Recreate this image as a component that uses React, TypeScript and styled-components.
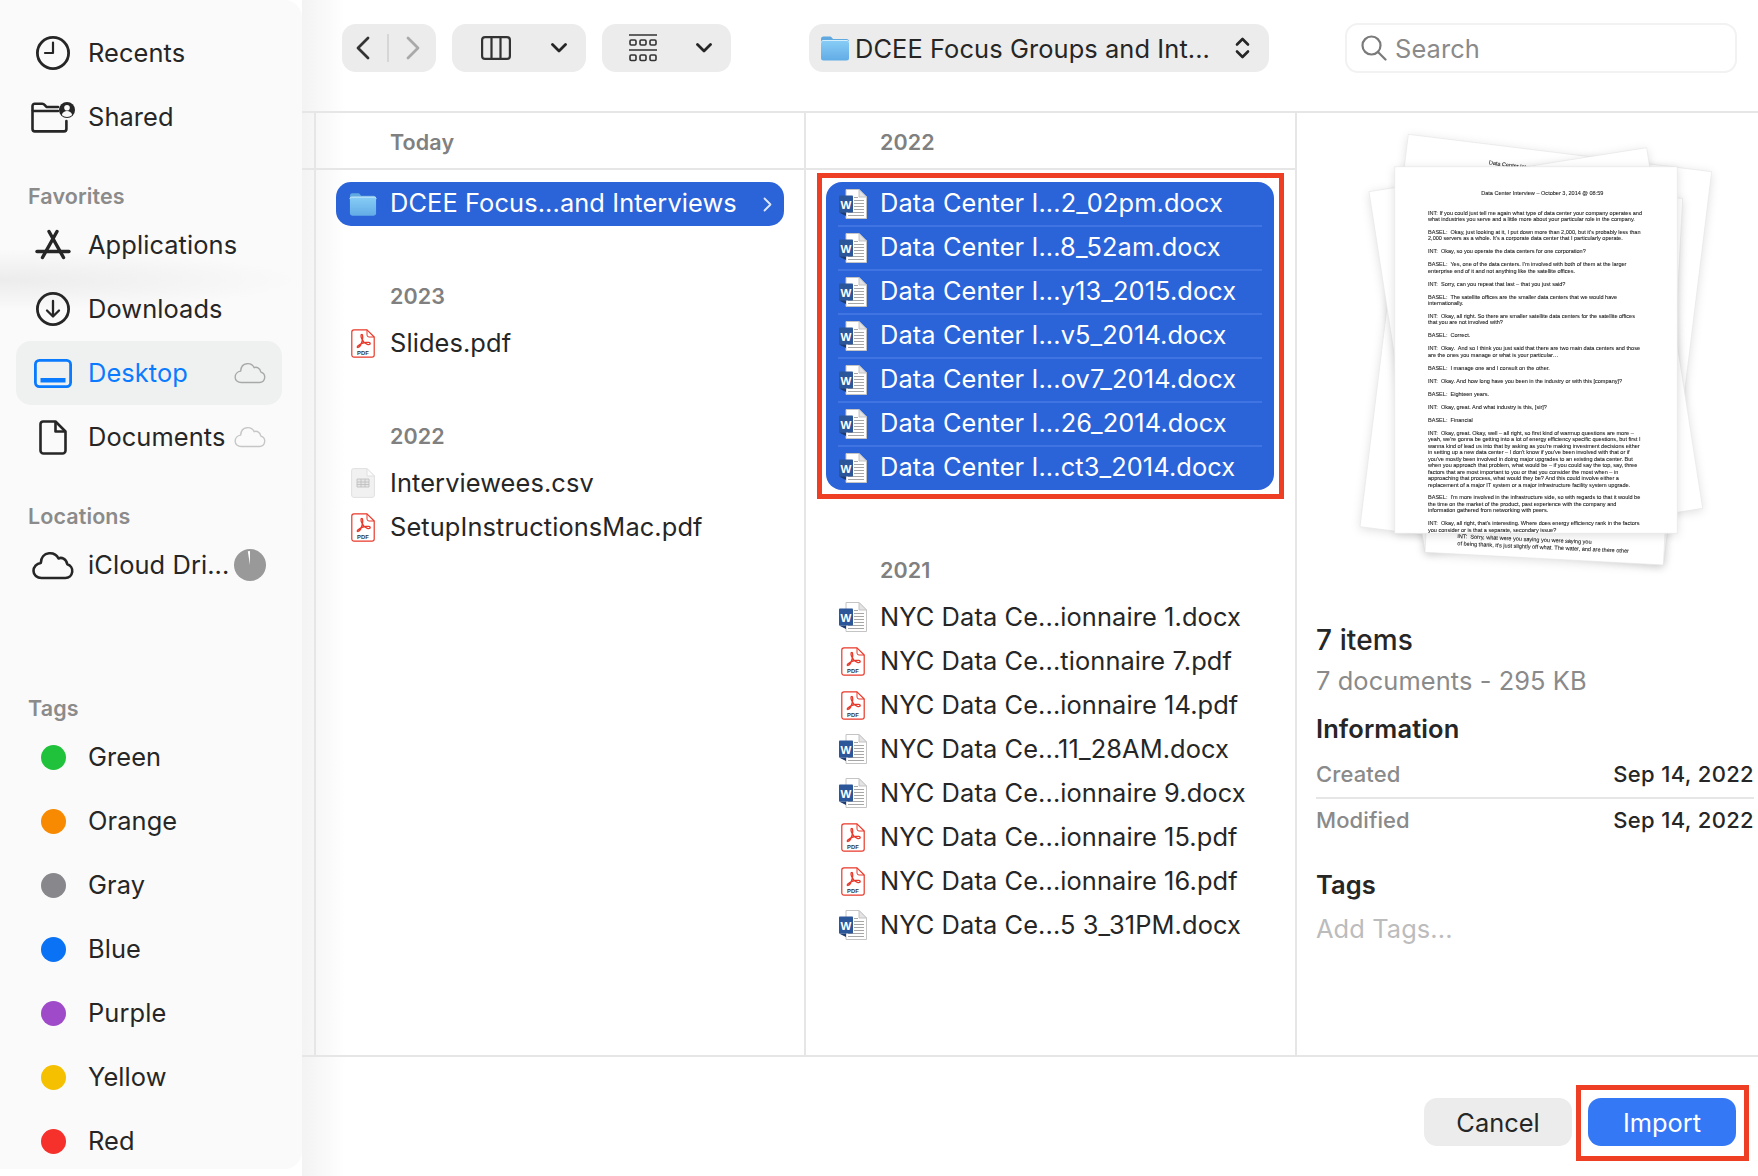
import React from 'react'
import styled, { createGlobalStyle } from 'styled-components'

const GlobalStyle = createGlobalStyle`
	html, body {
		margin: 0;
		padding: 0;
		background: #f4f4f4;
	}
	* {
		box-sizing: border-box;
	}
`

const FONT = `Inter, "Noto Sans", "Liberation Sans", sans-serif`

const Window = styled.div`
	width: 1758px;
	height: 1176px;
	display: flex;
	overflow: hidden;
	font-family: ${FONT};
	letter-spacing: 0.1px;
	color: #262626;
	background: #fff;
`

const Sidebar = styled.aside`
	width: 302px;
	height: 1169px;
	flex: none;
	padding-top: 21px;
	overflow: hidden;
	border-radius: 0 18px 18px 0;
	background:
		radial-gradient(ellipse 300px 30px at 0px 280px, #ececec 0%, rgba(236, 236, 236, 0) 100%),
		#fafafa;
	position: relative;
	z-index: 1;
`

const SectionTitle = styled.div<{ $gap: number }>`
	height: 34px;
	margin-top: ${p => p.$gap}px;
	padding-left: 28px;
	display: flex;
	align-items: center;
	font-size: 21.5px;
	font-weight: 600;
	color: #8b8b8b;
`

const NavRow = styled.div<{ $active?: boolean }>`
	height: 64px;
	margin: 0 20px 0 16px;
	padding: 0 16px 0 14px;
	display: flex;
	align-items: center;
	font-size: 25.4px;
	border-radius: 15px;
	background: ${p => (p.$active ? '#eff0f0' : 'transparent')};
	color: ${p => (p.$active ? '#0a7aff' : '#262626')};
`

const NavIcon = styled.span`
	width: 46px;
	flex: none;
	display: flex;
	align-items: center;
	justify-content: center;
	margin-right: 12px;
`

const NavLabel = styled.span`
	flex: 1;
	padding-bottom: 2px;
	white-space: nowrap;
`

const TagDot = styled.span<{ $color: string }>`
	width: 25px;
	height: 25px;
	border-radius: 50%;
	background: ${p => p.$color};
`

const Main = styled.main`
	flex: 1;
	min-width: 0;
	display: flex;
	flex-direction: column;
	background: linear-gradient(90deg, #f3f3f3 0, #ffffff 44px);
`

const Toolbar = styled.header`
	height: 113px;
	flex: none;
	padding: 0 0 15px 40px;
	display: flex;
	align-items: center;
	gap: 16px;
	border-bottom: 2px solid #e6e6e6;
`

const Pill = styled.div<{ $w: number; $ml?: number; $pad?: string }>`
	width: ${p => p.$w}px;
	height: 48px;
	flex: none;
	margin-left: ${p => p.$ml || 0}px;
	padding: ${p => p.$pad || '0'};
	display: flex;
	align-items: center;
	justify-content: space-between;
	border-radius: 14px;
	background: #ececec;
`

const NavSeparator = styled.span`
	width: 2px;
	height: 28px;
	background: #d6d6d6;
`

const PathLabel = styled.span`
	flex: 1;
	margin-left: 5px;
	font-size: 25.4px;
	white-space: nowrap;
	color: #262626;
`

const SearchField = styled.div`
	width: 392px;
	height: 50px;
	flex: none;
	margin-left: 60px;
	padding-left: 14px;
	display: flex;
	align-items: center;
	gap: 8px;
	font-size: 25.4px;
	color: #8a8a8a;
	background: #fff;
	border: 2px solid #f2f2f2;
	border-radius: 13px;
`

const Browser = styled.div`
	flex: 1;
	min-height: 0;
	display: flex;
`

const Column = styled.section<{ $w: number }>`
	width: ${p => p.$w}px;
	flex: none;
	border-right: 2px solid #e6e6e6;
`

const ColumnHead = styled.div`
	height: 57px;
	padding: 2px 0 0 74px;
	display: flex;
	align-items: center;
	font-size: 21.5px;
	font-weight: 600;
	color: #808080;
	border-bottom: 2px solid #e6e6e6;
`

const FileList = styled.div`
	padding-top: 12px;
`

const GroupTitle = styled.div<{ $gap: number; $after: number }>`
	height: 44px;
	margin: ${p => p.$gap}px 0 ${p => p.$after}px;
	padding-left: 74px;
	display: flex;
	align-items: center;
	font-size: 21.5px;
	font-weight: 600;
	color: #808080;
`

const FileName = styled.span`
	flex: 1;
	padding-bottom: 2px;
`

const FileRow = styled.div<{ $selected?: boolean }>`
	height: 44px;
	margin: 0 20px;
	padding: 0 12px 0 13px;
	display: flex;
	align-items: center;
	font-size: 25.4px;
	white-space: nowrap;
	color: ${p => (p.$selected ? '#fff' : '#262626')};
	background: ${p => (p.$selected ? '#2b63d9' : 'transparent')};
	border-radius: ${p => (p.$selected ? '15px' : '0')};
	${FileName} {
		padding-bottom: ${p => (p.$selected ? '4px' : '2px')};
	}
`

const FileIcon = styled.span`
	width: 28px;
	flex: none;
	margin-right: 13px;
	display: flex;
	align-items: center;
	justify-content: center;
`

const Selection = styled.div`
	position: relative;
	margin: 0 21px 0 20px;
	background: #2b63d9;
	border-radius: 16px;
	&::after {
		content: '';
		position: absolute;
		top: -9px;
		bottom: -9px;
		left: -9px;
		right: -10px;
		border: 5px solid #ee3f24;
		pointer-events: none;
	}
`

const SelectionRow = styled.div`
	position: relative;
	height: 44px;
	padding-left: 13px;
	display: flex;
	align-items: center;
	font-size: 25.4px;
	white-space: nowrap;
	color: #fff;
	${FileName} {
		padding-bottom: 4px;
	}
	& + &::before {
		content: '';
		position: absolute;
		top: -1px;
		left: 12px;
		right: 12px;
		height: 2px;
		background: #3f74e2;
	}
`

const Preview = styled.section`
	flex: 1;
	min-width: 0;
	padding: 7px 0 0 3px;
`

const PageStack = styled.svg`
	display: block;
	filter: blur(0.35px);
	text {
		font-family: "Liberation Sans", Arial, sans-serif;
		font-size: 16.7px;
		letter-spacing: 0;
		fill: #222;
		stroke: #222;
		stroke-width: 0.25;
		white-space: pre;
	}
	polygon {
		fill: #fff;
		stroke: #e6e6e6;
		stroke-width: 2;
		filter: drop-shadow(0 6px 14px rgba(0, 0, 0, 0.12));
	}
`

const Info = styled.div`
	margin-top: 40px;
	padding: 0 4px 0 16px;
`

const ItemCount = styled.div`
	height: 40px;
	line-height: 40px;
	font-size: 28px;
	font-weight: 500;
	color: #262626;
`

const Summary = styled.div`
	height: 38px;
	margin-top: 2px;
	line-height: 38px;
	font-size: 25.4px;
	color: #8a8a8a;
`

const InfoHeading = styled.div<{ $gap: number }>`
	height: 36px;
	margin-top: ${p => p.$gap}px;
	line-height: 36px;
	font-size: 25.5px;
	font-weight: 600;
	color: #262626;
`

const MetaRow = styled.div<{ $h: number; $line?: boolean }>`
	height: ${p => p.$h}px;
	padding-top: ${p => (p.$line ? '4px' : '0')};
	display: flex;
	align-items: center;
	justify-content: space-between;
	font-size: 22px;
	border-bottom: ${p => (p.$line ? '2px solid #e6e6e6' : 'none')};
`

const MetaKey = styled.span`
	font-weight: 500;
	color: #8a8a8a;
`

const MetaValue = styled.span`
	font-weight: 500;
	letter-spacing: 0.35px;
	color: #262626;
`

const AddTags = styled.div`
	height: 40px;
	margin-top: 6px;
	line-height: 40px;
	font-size: 25.4px;
	color: #bcbcbc;
`

const Footer = styled.footer`
	height: 121px;
	flex: none;
	padding: 41px 22px 0 0;
	display: flex;
	justify-content: flex-end;
	gap: 16px;
	border-top: 2px solid #e6e6e6;
`

const Button = styled.button<{ $primary?: boolean }>`
	position: relative;
	width: 148px;
	height: 48px;
	border: none;
	border-radius: 13px;
	font-family: ${FONT};
	font-size: 25.4px;
	color: ${p => (p.$primary ? '#fff' : '#262626')};
	background: ${p => (p.$primary ? '#3478f6' : '#ececec')};
	${p => p.$primary && `
		&::after {
			content: '';
			position: absolute;
			top: -13px;
			bottom: -15px;
			left: -12px;
			right: -13px;
			border: 5px solid #ee3f24;
		}
	`}
`

const ink = '#262626'

const ClockIcon = () => (
	<svg width="36" height="36" viewBox="0 0 36 36" fill="none" stroke={ink} strokeWidth="2.8" strokeLinecap="round" strokeLinejoin="round">
		<circle cx="18" cy="18" r="15.6" />
		<path d="M18 7.5V18H10" strokeWidth="2.2" />
	</svg>
)

const SharedIcon = () => (
	<svg width="44" height="32" viewBox="0 0 44 32" fill="none" stroke={ink} strokeWidth="2.6" strokeLinecap="round" strokeLinejoin="round">
		<path d="M1.5 9V5a2.2 2.2 0 0 1 2.2-2.2h7.5c1.2 0 1.8 .4 2.6 1.3L15.5 6H27" />
		<path d="M27 10H1.5v18a2.4 2.4 0 0 0 2.4 2.4H33a2.4 2.4 0 0 0 2.4-2.4v-8" />
		<circle cx="36" cy="9" r="8" fill={ink} stroke="none" />
		<circle cx="36" cy="6.8" r="2.8" fill="#fafafa" stroke="none" />
		<path d="M30.8 14c.8-3 3-4 5.2-4s4.400 1 5.200 4c-1.400 1.300-3.200 2-5.200 2s-3.800-.7-5.200-2z" fill="#fafafa" stroke="none" />
	</svg>
)

const AppsIcon = () => (
	<svg width="36" height="32" viewBox="0 0 36 32" fill="none" stroke={ink} strokeWidth="3.400" strokeLinecap="round">
		<path d="M14 2.500l14.500 26" />
		<path d="M22 2.500L7.500 28.500" />
		<path d="M2 22.500h32" />
	</svg>
)

const DownloadIcon = () => (
	<svg width="36" height="36" viewBox="0 0 36 36" fill="none" stroke={ink} strokeWidth="2.8" strokeLinecap="round" strokeLinejoin="round">
		<circle cx="18" cy="18" r="15.6" />
		<path d="M18 10v15M12 19.500l6 6 6-6" strokeWidth="2.3" />
	</svg>
)

const DesktopIcon = () => (
	<svg width="38" height="29" viewBox="0 0 38 29" fill="none">
		<rect x="1.400" y="1.400" width="35.200" height="26.200" rx="4" stroke="#0a7aff" strokeWidth="2.800" />
		<rect x="6.500" y="19" width="25" height="4.500" fill="#0a7aff" />
	</svg>
)

const DocumentIcon = () => (
	<svg width="28" height="35" viewBox="0 0 28 35" fill="none" stroke={ink} strokeWidth="2.600" strokeLinejoin="round">
		<path d="M4 1.500H16.500L26.500 11.500V30.500a3 3 0 0 1-3 3H4.500a3 3 0 0 1-3-3V4a2.500 2.500 0 0 1 2.500-2.500z" />
		<path d="M16.500 1.500V11.500H26.500" />
	</svg>
)

const CloudIcon = ({ w, h, color, weight }: { w: number; h: number; color: string; weight: number }) => (
	<svg width={w} height={h} viewBox="0 0 42 28" fill="none" stroke={color} strokeWidth={weight} strokeLinejoin="round">
		<path d="M9.500 26.500h24a7 7 0 0 0 1.800-13.700C34 7 29.500 5.500 26.500 7 24.500 3 20.500 1.500 17 1.800c-5 .4-8 4.200-8.200 9.700C4.500 12 1.500 15.500 1.500 19.500c0 4 3.500 7 8 7z" />
	</svg>
)

const StorageIcon = () => (
	<svg width="32" height="32" viewBox="0 0 32 32">
		<circle cx="16" cy="16" r="16" fill="#999999" />
		<path d="M16 16L13.800 2.200 16 2z" fill="#fff" />
	</svg>
)

const Chevron = ({ dir, color = '#333' }: { dir: 'left' | 'right'; color?: string }) => (
	<svg width="14" height="24" viewBox="0 0 14 24" fill="none" stroke={color} strokeWidth="2.800" strokeLinecap="round" strokeLinejoin="round">
		<path d={dir === 'left' ? 'M12 2L2 12l10 10' : 'M2 2l10 10L2 22'} />
	</svg>
)

const ChevronDown = () => (
	<svg width="16" height="10" viewBox="0 0 16 10" fill="none" stroke="#262626" strokeWidth="2.800" strokeLinecap="round" strokeLinejoin="round">
		<path d="M1.500 1.500L8 8l6.500-6.500" />
	</svg>
)

const ColumnsIcon = () => (
	<svg width="30" height="24" viewBox="0 0 30 24" fill="none" stroke="#333" strokeWidth="2.200">
		<rect x="1.100" y="1.100" width="27.800" height="21.800" rx="3" />
		<path d="M10.500 1v22M19.500 1v22" />
	</svg>
)

const GroupIcon = () => (
	<svg width="28" height="28" viewBox="0 0 28 28" fill="none" stroke="#333" strokeWidth="1.600">
		<path d="M0 1h28M0 16h28" />
		<rect x="1" y="6" width="6" height="5" rx="1.200" />
		<rect x="11" y="6" width="6" height="5" rx="1.200" />
		<rect x="21" y="6" width="6" height="5" rx="1.200" />
		<rect x="1" y="21" width="6" height="5.500" rx="1.200" />
		<rect x="11" y="21" width="6" height="5.500" rx="1.200" />
		<rect x="21" y="21" width="6" height="5.500" rx="1.200" />
	</svg>
)

const StepperIcon = () => (
	<svg width="15" height="22" viewBox="0 0 15 22" fill="none" stroke="#262626" strokeWidth="2.600" strokeLinecap="round" strokeLinejoin="round">
		<path d="M2 7.500L7.500 2 13 7.500M2 14.500L7.500 20 13 14.500" />
	</svg>
)

const SearchIcon = () => (
	<svg width="26" height="26" viewBox="0 0 26 26" fill="none" stroke="#7a7a7a" strokeWidth="2.200" strokeLinecap="round">
		<circle cx="10.500" cy="10.500" r="9" />
		<path d="M17 17l7.500 7.500" />
	</svg>
)

const FolderIcon = () => (
	<svg width="30" height="25" viewBox="0 0 30 25">
		<defs>
			<linearGradient id="folderFill" x1="0" y1="0" x2="0" y2="1">
				<stop offset="0" stopColor="#88cdf6" />
				<stop offset="1" stopColor="#62ace6" />
			</linearGradient>
		</defs>
		<path d="M1 5V3a2.500 2.500 0 0 1 2.500-2.500h6c1.200 0 1.800 .5 2.500 1.300L13 3h13.500A2.500 2.500 0 0 1 29 5.500V6H1z" fill="#5fa8e0" />
		<rect x="1" y="4.500" width="28" height="20" rx="2.500" fill="url(#folderFill)" />
		<path d="M1 6.500c0-1.200 .8-2 2-2h24c1.200 0 2 .8 2 2" fill="none" stroke="#d5eefc" strokeWidth="1" />
	</svg>
)

const WordIcon = () => (
	<svg width="28" height="30" viewBox="0 0 28 30">
		<path d="M7 .5H20L27.500 8V29.500H7z" fill="#fff" stroke="#c4c4c4" strokeWidth="1" />
		<path d="M20 .5V8H27.500z" fill="#e4e4e4" stroke="#c4c4c4" strokeWidth="1" strokeLinejoin="round" />
		<path d="M15 8.500h4M15 11.500h10M15 14.500h10M15 17.500h10M15 20.500h10M9 23.500h16M9 26.500h16" stroke="#a6a6a6" strokeWidth="1" />
		<rect x="0" y="6.500" width="14" height="17" rx=".8" fill="#2b579a" />
		<path d="M0 23.500h7v3.500z" fill="#1c3c72" />
		<text x="7" y="19.500" textAnchor="middle" fontFamily="Liberation Sans, sans-serif" fontSize="11.500" fontWeight="700" fill="#fff">W</text>
	</svg>
)

const PdfIcon = () => (
	<svg width="24" height="29" viewBox="0 0 24 29">
		<path d="M3 .8H16L23.200 8V26a2.200 2.200 0 0 1-2.200 2.200H3A2.200 2.200 0 0 1 .8 26V3A2.200 2.200 0 0 1 3 .8z" fill="#fff" stroke="#e8392a" strokeWidth="1.200" strokeLinejoin="round" />
		<path d="M16 .8V6a2 2 0 0 0 2 2h5.200" fill="none" stroke="#e8392a" strokeWidth="1" />
		<path d="M10.800 5.500c-1.200 .1-1 2.400 .2 4.800 1.100 2.300 2.900 4.300 5.300 5 1.800 .6 3 .1 2.900-.8-.1-1-2-1.400-4.500-1.100-3 .4-6 1.700-7.900 3.600-.9 .9-.6 1.800 .3 1.500 1.800-.6 3.600-4.300 4.400-8 .5-2.600 .2-5.100-.7-5z" fill="none" stroke="#e8392a" strokeWidth="1.300" strokeLinejoin="round" />
		<text x="12" y="26" textAnchor="middle" fontFamily="Liberation Sans, sans-serif" fontSize="5.800" fontWeight="700" fill="#333">PDF</text>
	</svg>
)

const CsvIcon = () => (
	<svg width="24" height="30" viewBox="0 0 24 30">
		<path d="M2.500 .6H16L23.400 8V27a2.400 2.400 0 0 1-2.400 2.400H3A2.400 2.400 0 0 1 .6 27V2.500A1.900 1.900 0 0 1 2.500 .6z" fill="#f1f1f1" stroke="#e0e0e0" strokeWidth="1" />
		<path d="M16 .6V8H23.400z" fill="#fbfbfb" stroke="#e0e0e0" strokeWidth="1" />
		<path d="M6 11h12v8H6zM6 14h12M6 16.500h12M10 11v8M14 11v8" fill="#e6e6e6" stroke="#bdbdbd" strokeWidth=".8" />
	</svg>
)

const pageLines: [number, string][] = [
	[284, 'INT: If you could just tell me again what type of data center your company operates and'],
	[303, 'what industries you serve and a little more about your particular role in the company.'],
	[342, "BASEL:  Okay, just looking at it, I put down more than 2,000, but it's probably less than"],
	[361, "2,000 servers as a whole. It's a corporate data center that I particularly operate."],
	[400, 'INT:  Okay, so you operate the data centers for one corporation?'],
	[439, "BASEL:  Yes, one of the data centers. I'm involved with both of them at the larger"],
	[458, 'enterprise end of it and not anything like the satellite offices.'],
	[497, 'INT:  Sorry, can you repeat that last – that you just said?'],
	[536, 'BASEL:  The satellite offices are the smaller data centers that we would have'],
	[555, 'internationally.'],
	[594, 'INT:  Okay, all right. So there are smaller satellite data centers for the satellite offices'],
	[613, 'that you are not involved with?'],
	[652, 'BASEL:  Correct.'],
	[691, 'INT:  Okay.  And so I think you just said that there are two main data centers and those'],
	[711, 'are the ones you manage or what is your particular…'],
	[750, 'BASEL:  I manage one and I consult on the other.'],
	[789, 'INT:  Okay. And how long have you been in the industry or with this [company]?'],
	[828, 'BASEL:  Eighteen years.'],
	[867, 'INT:  Okay, great. And what industry is this, [sir]?'],
	[905, 'BASEL:  Financial'],
	[945, 'INT:  Okay, great. Okay, well – all right, so first kind of warmup questions are more –'],
	[964, "yeah, we're gonna be getting into a lot of energy efficiency specific questions, but first I"],
	[983, "wanna kind of lead us into that by asking as you're making investment decisions either"],
	[1003, "in setting up a new data center – I don't know if you've been involved with that or if"],
	[1022, "you've mostly been involved in doing major upgrades to an existing data center. But"],
	[1042, 'when you approach that problem, what would be – if you could say the top, say, three'],
	[1061, 'factors that are most important to you or that you consider the most when – in'],
	[1080, 'approaching that process, what would they be? And this could involve either a'],
	[1100, 'replacement of a major IT system or a major infrastructure facility system upgrade.'],
	[1138, "BASEL:  I'm more involved in the infrastructure side, so with regards to that it would be"],
	[1158, 'the time on the market of the product, past experience with the company and'],
	[1177, 'information gathered from networking with peers.'],
	[1216, "INT:  Okay, all right, that's interesting. Where does energy efficiency rank in the factors"],
	[1235, 'you consider or is that a separate, secondary issue?'],
]

const selectedFiles = [
	'Data Center I...2_02pm.docx',
	'Data Center I...8_52am.docx',
	'Data Center I...y13_2015.docx',
	'Data Center I...v5_2014.docx',
	'Data Center I...ov7_2014.docx',
	'Data Center I...26_2014.docx',
	'Data Center I...ct3_2014.docx',
]

const olderFiles: [string, 'word' | 'pdf'][] = [
	['NYC Data Ce...ionnaire 1.docx', 'word'],
	['NYC Data Ce...tionnaire 7.pdf', 'pdf'],
	['NYC Data Ce...ionnaire 14.pdf', 'pdf'],
	['NYC Data Ce...11_28AM.docx', 'word'],
	['NYC Data Ce...ionnaire 9.docx', 'word'],
	['NYC Data Ce...ionnaire 15.pdf', 'pdf'],
	['NYC Data Ce...ionnaire 16.pdf', 'pdf'],
	['NYC Data Ce...5 3_31PM.docx', 'word'],
]

const tags = [
	['Green', '#1fc23a'],
	['Orange', '#f78a00'],
	['Gray', '#87878c'],
	['Blue', '#0a72f5'],
	['Purple', '#9f4bc9'],
	['Yellow', '#f5c000'],
	['Red', '#f6302a'],
]

const App = () => (
	<>
		<GlobalStyle />
		<Window>
			<Sidebar>
				<NavRow><NavIcon><ClockIcon /></NavIcon><NavLabel>Recents</NavLabel></NavRow>
				<NavRow><NavIcon><SharedIcon /></NavIcon><NavLabel>Shared</NavLabel></NavRow>
				<SectionTitle $gap={30}>Favorites</SectionTitle>
				<NavRow><NavIcon><AppsIcon /></NavIcon><NavLabel>Applications</NavLabel></NavRow>
				<NavRow><NavIcon><DownloadIcon /></NavIcon><NavLabel>Downloads</NavLabel></NavRow>
				<NavRow $active>
					<NavIcon><DesktopIcon /></NavIcon>
					<NavLabel>Desktop</NavLabel>
					<CloudIcon w={32} h={22} color="#a8a8a8" weight={1.800} />
				</NavRow>
				<NavRow>
					<NavIcon><DocumentIcon /></NavIcon>
					<NavLabel>Documents</NavLabel>
					<CloudIcon w={32} h={22} color="#c6c6c6" weight={1.800} />
				</NavRow>
				<SectionTitle $gap={30}>Locations</SectionTitle>
				<NavRow>
					<NavIcon><CloudIcon w={42} h={29} color={ink} weight={2.600} /></NavIcon>
					<NavLabel>iCloud Dri...</NavLabel>
					<StorageIcon />
				</NavRow>
				<SectionTitle $gap={94}>Tags</SectionTitle>
				{tags.map(([name, color]) => (
					<NavRow key={name}>
						<NavIcon><TagDot $color={color} /></NavIcon>
						<NavLabel>{name}</NavLabel>
					</NavRow>
				))}
			</Sidebar>
			<Main>
				<Toolbar>
					<Pill $w={94} $pad="0 16px 0 14px">
						<Chevron dir="left" />
						<NavSeparator />
						<Chevron dir="right" color="#a9a9a9" />
					</Pill>
					<Pill $w={134} $pad="0 19px 0 29px">
						<ColumnsIcon />
						<ChevronDown />
					</Pill>
					<Pill $w={129} $pad="0 19px 0 27px">
						<GroupIcon />
						<ChevronDown />
					</Pill>
					<Pill $w={460} $ml={62} $pad="0 19px 0 11px">
						<FolderIcon />
						<PathLabel>DCEE Focus Groups and Int...</PathLabel>
						<StepperIcon />
					</Pill>
					<SearchField><SearchIcon />Search</SearchField>
				</Toolbar>
				<Browser>
					<Column $w={14}><ColumnHead /></Column>
					<Column $w={490}>
						<ColumnHead>Today</ColumnHead>
						<FileList>
							<FileRow $selected>
								<FileIcon><FolderIcon /></FileIcon>
								<FileName>DCEE Focus...and Interviews</FileName>
								<svg width="9" height="15" viewBox="0 0 9 15" fill="none" stroke="#dfe8fb" strokeWidth="1.800" strokeLinecap="round" strokeLinejoin="round">
									<path d="M1.500 1.500l6 6-6 6" />
								</svg>
							</FileRow>
							<GroupTitle $gap={48} $after={3}>2023</GroupTitle>
							<FileRow><FileIcon><PdfIcon /></FileIcon><FileName>Slides.pdf</FileName></FileRow>
							<GroupTitle $gap={49} $after={3}>2022</GroupTitle>
							<FileRow><FileIcon><CsvIcon /></FileIcon><FileName>Interviewees.csv</FileName></FileRow>
							<FileRow><FileIcon><PdfIcon /></FileIcon><FileName>SetupInstructionsMac.pdf</FileName></FileRow>
						</FileList>
					</Column>
					<Column $w={491}>
						<ColumnHead>2022</ColumnHead>
						<FileList>
							<Selection>
								{selectedFiles.map(name => (
									<SelectionRow key={name}>
										<FileIcon><WordIcon /></FileIcon>
										<FileName>{name}</FileName>
									</SelectionRow>
								))}
							</Selection>
							<GroupTitle $gap={58} $after={3}>2021</GroupTitle>
							{olderFiles.map(([name, kind]) => (
								<FileRow key={name}>
									<FileIcon>{kind === 'word' ? <WordIcon /> : <PdfIcon />}</FileIcon>
									<FileName>{name}</FileName>
								</FileRow>
							))}
						</FileList>
					</Column>
					<Preview>
						<PageStack width="458" height="460" viewBox="0 0 1374 1380">
							<polygon points="325,43 1235,155 1090,1335 180,1220" />
							<text x="566" y="133" transform="rotate(7 566 133)">Data Center Interview</text>
							<polygon points="207,215 1040,83 1208,1165 375,1297" />
							<polygon points="433,197 1148,235 1090,1335 375,1297" />
							<text x="472" y="1254" transform="rotate(2.500 472 1254)">INT:  Sorry, what were you saying you were saying you</text>
							<text x="472" y="1276" transform="rotate(2.500 472 1276)">of being thank, it's just slightly off what. The water, and are there other</text>
							<polygon points="284,140 1132,140 1132,1240 284,1240" />
							<text x="727" y="225" textAnchor="middle">Data Center Interview – October 3, 2014 @ 08:59</text>
							{pageLines.map(([y, line]) => (
								<text key={y} x="384" y={y}>{line}</text>
							))}
						</PageStack>
						<Info>
							<ItemCount>7 items</ItemCount>
							<Summary>7 documents - 295 KB</Summary>
							<InfoHeading $gap={11}>Information</InfoHeading>
							<MetaRow $h={52} $line><MetaKey>Created</MetaKey><MetaValue>Sep 14, 2022</MetaValue></MetaRow>
							<MetaRow $h={42}><MetaKey>Modified</MetaKey><MetaValue>Sep 14, 2022</MetaValue></MetaRow>
							<InfoHeading $gap={26}>Tags</InfoHeading>
							<AddTags>Add Tags...</AddTags>
						</Info>
					</Preview>
				</Browser>
				<Footer>
					<Button>Cancel</Button>
					<Button $primary>Import</Button>
				</Footer>
			</Main>
		</Window>
	</>
)

export default App
